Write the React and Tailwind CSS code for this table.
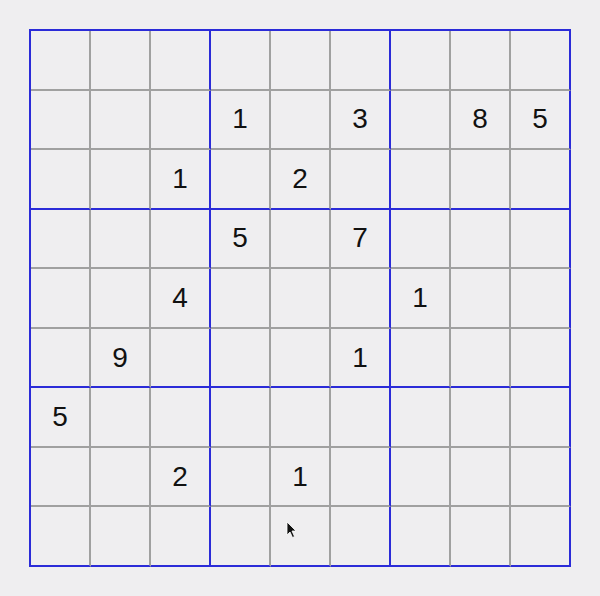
import React from "react";

const puzzle = [
  [0, 0, 0, 0, 0, 0, 0, 0, 0],
  [0, 0, 0, 1, 0, 3, 0, 8, 5],
  [0, 0, 1, 0, 2, 0, 0, 0, 0],
  [0, 0, 0, 5, 0, 7, 0, 0, 0],
  [0, 0, 4, 0, 0, 0, 1, 0, 0],
  [0, 9, 0, 0, 0, 1, 0, 0, 0],
  [5, 0, 0, 0, 0, 0, 0, 0, 0],
  [0, 0, 2, 0, 1, 0, 0, 0, 0],
  [0, 0, 0, 0, 0, 0, 0, 0, 0],
];

const Cell = ({ value, row, col }) => {
  const right = col % 3 === 2 ? "border-r-[#2b2bd8]" : "border-r-[#a0a0a0]";
  const bottom = row % 3 === 2 ? "border-b-[#2b2bd8]" : "border-b-[#a0a0a0]";
  return (
    <div
      className={`flex items-center justify-center border-r-2 border-b-2 ${right} ${bottom} text-[28px] text-[#111]`}
    >
      {value ? value : ""}
    </div>
  );
};

const App = () => {
  return (
    <div
      className="relative w-[600px] h-[596px] bg-[#efeef0] pt-[29px] pl-[29px]"
      style={{ fontFamily: '"Liberation Sans", Arial, sans-serif' }}
    >
      <div className="grid grid-cols-9 grid-rows-9 w-[542px] h-[538px] border-l-2 border-t-2 border-[#2b2bd8]">
        {puzzle.map((r, i) =>
          r.map((v, j) => <Cell key={`${i}-${j}`} value={v} row={i} col={j} />)
        )}
      </div>

      {/* mouse pointer */}
      <svg
        className="absolute left-[286px] top-[521px]"
        width="12"
        height="18"
        viewBox="0 0 12 18"
      >
        <path
          d="M1 1 L1 14 L4 11 L6.5 16.5 L8.5 15.5 L6 10 L10 10 Z"
          fill="#111"
          stroke="#fff"
          strokeWidth="0.8"
        />
      </svg>
    </div>
  );
};

export default App;
